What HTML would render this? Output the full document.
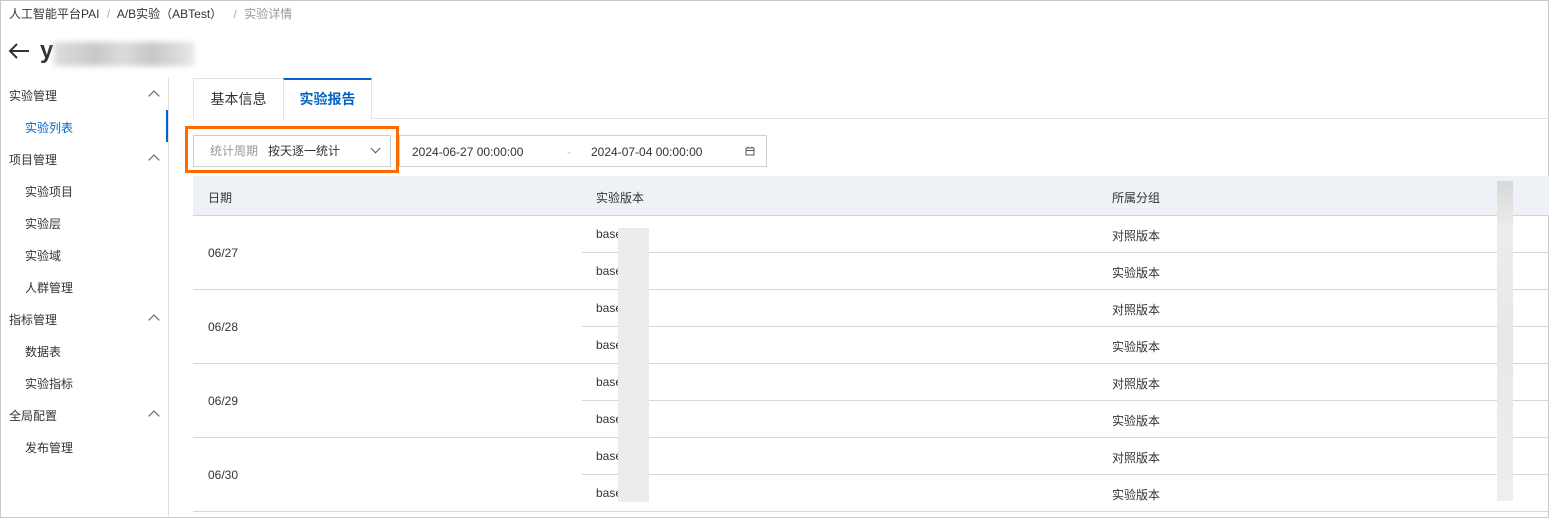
<!DOCTYPE html><html><head><meta charset="utf-8"><style>
*{margin:0;padding:0;box-sizing:border-box}
body{width:1549px;height:518px;overflow:hidden;background:#fff;font-family:"Liberation Sans","Noto Sans CJK SC",sans-serif;font-size:12px;color:#333;position:relative}
.a{position:absolute;white-space:nowrap}
.frame{position:absolute;left:0;top:0;width:1549px;height:518px;border:1px solid #c8c8c8}
.sb{position:absolute;left:0;width:168px;height:32px;line-height:32px}
.h{padding-left:9px;color:#333}
.s{padding-left:25px;color:#333}
.car{position:absolute;right:10px;top:12px;width:8px;height:8px;border-left:1.3px solid #555;border-top:1.3px solid #555;transform:rotate(45deg)}
.hl{position:absolute;height:1px;background:#d4d7dc}
.bl{position:absolute;width:28px;height:22px;background:linear-gradient(90deg,#eee,#e6e6e6,#eee);filter:blur(1px)}
</style></head><body>
<div class="frame"></div>
<div class="a" style="left:9px;top:5px;color:#333">人工智能平台PAI <span style="color:#aaa;margin:0 4px">/</span> A/B实验（ABTest） <span style="color:#aaa;margin:0 4px 0 8px">/</span> <span style="color:#999">实验详情</span></div>
<svg class="a" style="left:8px;top:43px" width="22" height="16" viewBox="0 0 22 16"><path d="M21 8H2M9 1L2 8l7 7" fill="none" stroke="#333" stroke-width="2"/></svg>
<div class="a" style="left:40px;top:37px;font-size:24px;font-weight:bold;color:#333">y</div>
<div class="a" style="left:54px;top:42px;width:140px;height:24px;background:linear-gradient(90deg,#ddd,#c8c8c8 30%,#dcdcdc 50%,#c6c6c6 70%,#e8e8e8);filter:blur(3px)"></div>
<div class="a" style="left:168px;top:77px;width:1px;height:441px;background:#e0e0e0"></div>
<div class="a" style="left:166px;top:110px;width:2px;height:32px;background:#0064c8"></div>
<div class="sb h" style="top:80px">实验管理<i class="car"></i></div>
<div class="sb s" style="top:112px;color:#0064c8">实验列表</div>
<div class="sb h" style="top:144px">项目管理<i class="car"></i></div>
<div class="sb s" style="top:176px">实验项目</div>
<div class="sb s" style="top:208px">实验层</div>
<div class="sb s" style="top:240px">实验域</div>
<div class="sb s" style="top:272px">人群管理</div>
<div class="sb h" style="top:304px">指标管理<i class="car"></i></div>
<div class="sb s" style="top:336px">数据表</div>
<div class="sb s" style="top:368px">实验指标</div>
<div class="sb h" style="top:400px">全局配置<i class="car"></i></div>
<div class="sb s" style="top:432px">发布管理</div>
<!-- tabs -->
<div class="hl" style="left:193px;top:118px;width:1356px;background:#e3e3e3"></div>
<div class="a" style="left:193px;top:78px;width:91px;height:41px;border:1px solid #e3e3e3;border-bottom:none;background:#fff;line-height:40px;text-align:center;font-size:14px;color:#333">基本信息</div>
<div class="a" style="left:283px;top:78px;width:89px;height:41px;border:1px solid #e3e3e3;border-top:2px solid #0064c8;border-bottom:none;background:#fff;line-height:38px;text-align:center;font-size:14px;font-weight:bold;color:#0064c8">实验报告</div>
<!-- filters -->
<div class="a" style="left:185px;top:126px;width:214px;height:47px;border:3px solid #ff6a00"></div>
<div class="a" style="left:193px;top:135px;width:198px;height:32px;border:1px solid #d0d0d0;line-height:30px;padding-left:16px"><span style="color:#999">统计周期</span>&nbsp;&nbsp;&nbsp;按天逐一统计</div>
<div class="a" style="left:372px;top:145px;width:7px;height:7px;border-right:1.2px solid #555;border-bottom:1.2px solid #555;transform:rotate(45deg)"></div>
<div class="a" style="left:399px;top:135px;width:368px;height:32px;border:1px solid #d0d0d0;line-height:30px"></div>
<div class="a" style="left:412px;top:145px">2024-06-27 00:00:00</div>
<div class="a" style="left:567px;top:145px;color:#bbb">-</div>
<div class="a" style="left:591px;top:145px">2024-07-04 00:00:00</div>
<svg class="a" style="left:745px;top:146px" width="10" height="10" viewBox="0 0 10 10"><rect x="1" y="2" width="8" height="7" fill="none" stroke="#555"/><path d="M1 4.5h8M3 0.5v2M7 0.5v2" stroke="#555"/></svg>
<!-- table -->
<div class="a" style="left:193px;top:176px;width:1356px;height:40px;background:#eef1f5;border-bottom:1px solid #d0d4da"></div>
<div class="a" style="left:208px;top:189px">日期</div>
<div class="a" style="left:596px;top:189px">实验版本</div>
<div class="a" style="left:1112px;top:189px">所属分组</div>
<div class="hl" style="left:582px;top:252px;width:967px"></div>
<div class="hl" style="left:193px;top:289px;width:1356px"></div>
<div class="hl" style="left:582px;top:326px;width:967px"></div>
<div class="hl" style="left:193px;top:363px;width:1356px"></div>
<div class="hl" style="left:582px;top:400px;width:967px"></div>
<div class="hl" style="left:193px;top:437px;width:1356px"></div>
<div class="hl" style="left:582px;top:474px;width:967px"></div>
<div class="hl" style="left:193px;top:511px;width:1356px"></div>
<div class="a" style="left:208px;top:246px">06/27</div>
<div class="a" style="left:208px;top:320px">06/28</div>
<div class="a" style="left:208px;top:394px">06/29</div>
<div class="a" style="left:208px;top:468px">06/30</div>
<div class="a" style="left:596px;top:227px">base</div><div class="a" style="left:1112px;top:227px">对照版本</div>
<div class="a" style="left:596px;top:264px">base</div><div class="a" style="left:1112px;top:264px">实验版本</div>
<div class="a" style="left:596px;top:301px">base</div><div class="a" style="left:1112px;top:301px">对照版本</div>
<div class="a" style="left:596px;top:338px">base</div><div class="a" style="left:1112px;top:338px">实验版本</div>
<div class="a" style="left:596px;top:375px">base</div><div class="a" style="left:1112px;top:375px">对照版本</div>
<div class="a" style="left:596px;top:412px">base</div><div class="a" style="left:1112px;top:412px">实验版本</div>
<div class="a" style="left:596px;top:449px">base</div><div class="a" style="left:1112px;top:449px">对照版本</div>
<div class="a" style="left:596px;top:486px">base</div><div class="a" style="left:1112px;top:486px">实验版本</div>
<div class="a" style="left:618px;top:228px;width:31px;height:274px;background:#ececec"></div>
<div class="a" style="left:1497px;top:181px;width:16px;height:320px;background:linear-gradient(180deg,#d8d8d8,#ececec 15%,#e8e8e8 50%,#eeeeee)"></div>
</body></html>
